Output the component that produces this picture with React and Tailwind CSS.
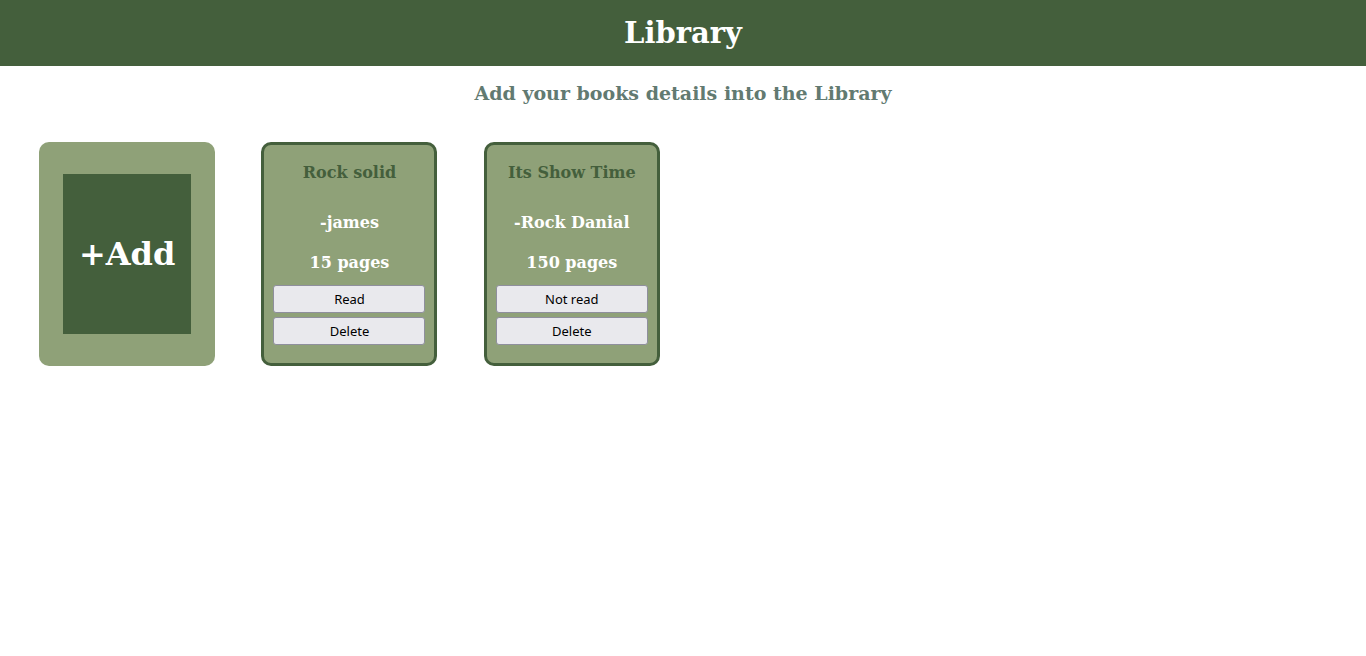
const books = [
  { title: 'Rock solid', author: 'james', pages: 15, read: true },
  { title: 'Its Show Time', author: 'Rock Danial', pages: 150, read: false },
];

function CardButton({ children }) {
  return (
    <button
      type="button"
      className="h-7 w-full rounded-[3px] border border-[#8f8f9d] bg-[#e9e9ed] font-['Noto_Sans',sans-serif] text-[13px] leading-5 font-normal text-black"
    >
      {children}
    </button>
  );
}

function BookCard({ book }) {
  return (
    <article className="flex h-56 w-44 flex-col items-center rounded-[10px] border-3 border-[#445f3c] bg-[#8fa178] px-[9px] pt-4 text-base leading-6 font-bold text-white">
      <h3 className="mb-[26px] text-[#445f3c]">{book.title}</h3>
      <p className="mb-4">-{book.author}</p>
      <p className="mb-[10px]">{book.pages} pages</p>
      <div className="flex w-full flex-col gap-1">
        <CardButton>{book.read ? 'Read' : 'Not read'}</CardButton>
        <CardButton>Delete</CardButton>
      </div>
    </article>
  );
}

export default function App() {
  return (
    <div className="min-h-screen bg-white font-['DejaVu_Serif',serif]">
      <header className="flex h-[66px] items-center justify-center bg-[#445f3c]">
        <h1 className="text-[29px] leading-8 font-bold text-white">Library</h1>
      </header>
      <main>
        <h2 className="pt-[15px] text-center text-[19px] leading-6 font-bold text-[#627a71]">
          Add your books details into the Library
        </h2>
        <section className="grid grid-cols-[repeat(auto-fill,minmax(200px,1fr))] justify-items-center gap-y-8 px-4 pt-[37px]">
          <div className="flex h-56 w-44 items-center justify-center rounded-[10px] bg-[#8fa178]">
            <button type="button" className="h-40 w-32 bg-[#445f3c] text-[32px] leading-10 font-bold text-white">
              +Add
            </button>
          </div>
          {books.map((book) => (
            <BookCard key={book.title} book={book} />
          ))}
        </section>
      </main>
    </div>
  );
}
